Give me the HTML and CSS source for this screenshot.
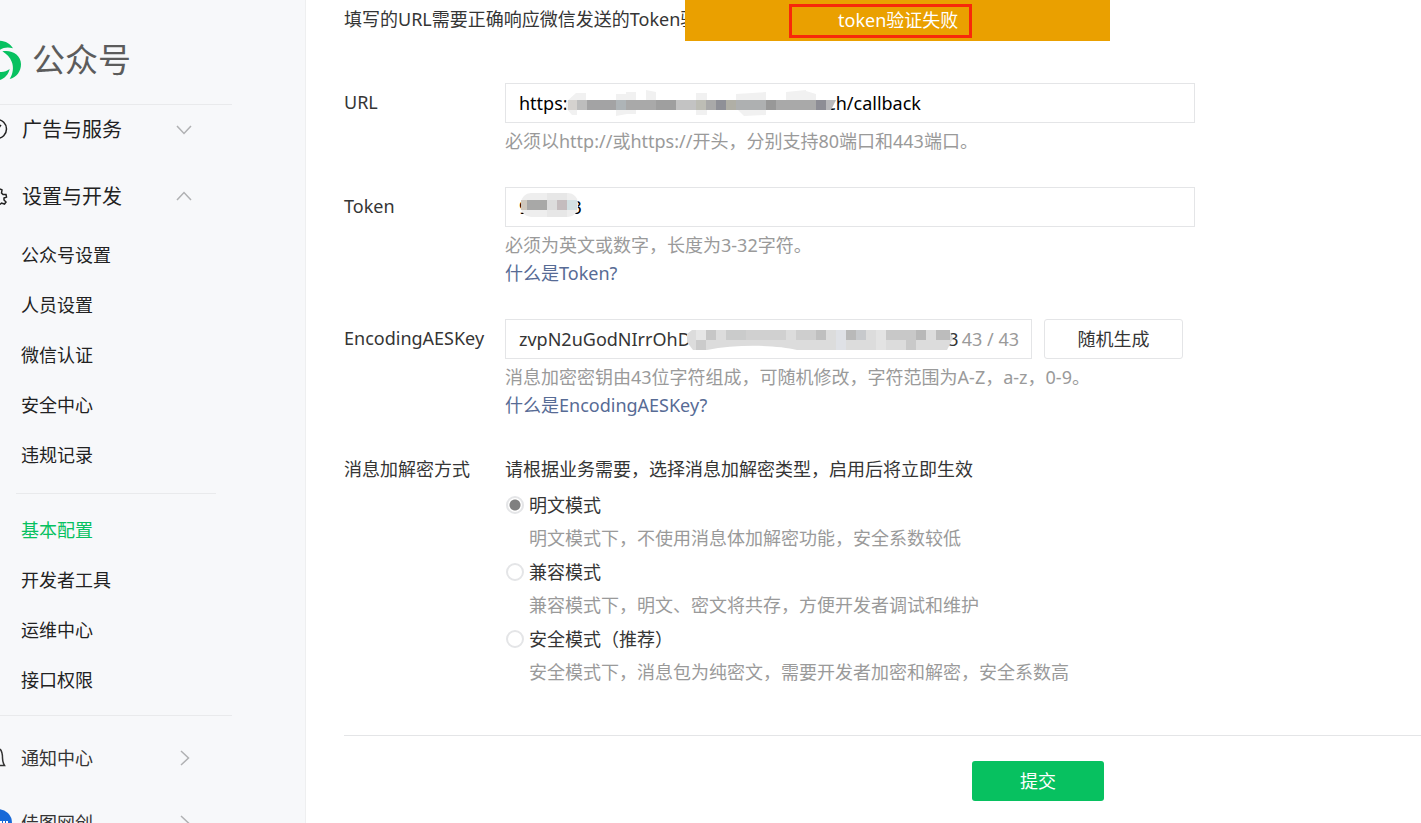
FILE: index.html
```html
<!DOCTYPE html>
<html lang="zh-CN">
<head>
    <meta charset="UTF-8">
    <meta name="viewport" content="width=device-width, initial-scale=1.0">
    <title>公众号</title>
    <link rel="stylesheet" href="styles.css">
</head>
<body>
    <div class="page">
        <aside class="sidebar">
            <div class="logo">
                <svg class="logo-icon" width="22" height="40" viewBox="0 0 66 120" aria-hidden="true">
                    <path fill="#07c160" d="M0 2C17 3 31 11 39 25C25 21 12 22 0 29Z"/>
                    <path fill="#07c160" d="M7 34C34 28 63 44 63 72C63 94 50 113 29 117C39 102 42 81 35 65C30 52 20 42 7 34Z"/>
                    <path fill="#07c160" d="M0 96C11 97 20 94 29 87C25 103 15 115 0 120Z"/>
                </svg>
                <span class="logo-text">公众号</span>
            </div>

            <nav class="menu">
                <a class="menu-title" href="#">
                    <svg class="menu-icon" width="22" height="24" viewBox="0 0 22 24" fill="none" stroke="#222" stroke-width="1.5" aria-hidden="true">
                        <circle cx="-3" cy="11" r="9.5"/>
                        <path d="M-4 13L1 7"/>
                    </svg>
                    <span>广告与服务</span>
                    <svg class="arrow" width="16" height="16" viewBox="0 0 16 16" fill="none" stroke="#b0b1b3" stroke-width="1.5" aria-hidden="true"><path d="M1 4L8 11.5L15 4"/></svg>
                </a>
                <a class="menu-title" href="#">
                    <svg class="menu-icon" width="22" height="24" viewBox="0 0 22 24" fill="none" stroke="#222" stroke-width="1.5" aria-hidden="true">
                        <path d="M0 4L2 5L1.5 8L3 9.5L6 9.5L6.500 12L4 13L4 15L6 17L4.5 19L1.5 18L0 19.5"/>
                    </svg>
                    <span>设置与开发</span>
                    <svg class="arrow" width="16" height="16" viewBox="0 0 16 16" fill="none" stroke="#b0b1b3" stroke-width="1.5" aria-hidden="true"><path d="M1 11L8 3.5L15 11"/></svg>
                </a>
                <ul class="submenu">
                    <li><a href="#">公众号设置</a></li>
                    <li><a href="#">人员设置</a></li>
                    <li><a href="#">微信认证</a></li>
                    <li><a href="#">安全中心</a></li>
                    <li><a href="#">违规记录</a></li>
                </ul>
                <ul class="submenu submenu-dev">
                    <li><a class="active" href="#">基本配置</a></li>
                    <li><a href="#">开发者工具</a></li>
                    <li><a href="#">运维中心</a></li>
                    <li><a href="#">接口权限</a></li>
                </ul>
            </nav>

            <div class="account">
                <a class="menu-title small" href="#">
                    <svg class="menu-icon" width="21" height="24" viewBox="0 0 21 24" fill="none" stroke="#333" stroke-width="1.5" aria-hidden="true">
                        <path d="M0 3C2 5 2.5 8 2.5 12C2.5 15 3 17 4.5 19.5H0"/>
                    </svg>
                    <span>通知中心</span>
                    <svg class="arrow" width="16" height="16" viewBox="0 0 16 16" fill="none" stroke="#b0b1b3" stroke-width="1.5" aria-hidden="true"><path d="M5 1L12.5 8L5 15"/></svg>
                </a>
                <a class="menu-title small" href="#">
                    <svg class="menu-icon" width="21" height="28" viewBox="0 0 21 28" aria-hidden="true">
                        <circle cx="-2" cy="14" r="14" fill="#1769d8"/>
                        <path d="M0 13H8" stroke="#fff" stroke-width="2" stroke-dasharray="2 1"/>
                    </svg>
                    <span>佳图网创</span>
                    <svg class="arrow" width="16" height="16" viewBox="0 0 16 16" fill="none" stroke="#b0b1b3" stroke-width="1.5" aria-hidden="true"><path d="M5 1L12.5 8L5 15"/></svg>
                </a>
            </div>
        </aside>

        <main class="content">
            <p class="intro">填写的URL需要正确响应微信发送的Token验证</p>

            <form class="config-form">
                <div class="form-row">
                    <label class="form-label" for="url">URL</label>
                    <div class="form-field">
                        <div class="input-box">
                            <input type="text" id="url" class="dark" value="https:/&nbsp;&nbsp;&nbsp;&nbsp;&nbsp;&nbsp;&nbsp;&nbsp;&nbsp;&nbsp;&nbsp;&nbsp;&nbsp;&nbsp;&nbsp;&nbsp;&nbsp;&nbsp;&nbsp;&nbsp;&nbsp;&nbsp;&nbsp;&nbsp;&nbsp;&nbsp;&nbsp;&nbsp;&nbsp;&nbsp;&nbsp;&nbsp;&nbsp;&nbsp;&nbsp;&nbsp;&nbsp;&nbsp;&nbsp;&nbsp;&nbsp;&nbsp;&nbsp;&nbsp;&nbsp;&nbsp;&nbsp;&nbsp;&nbsp;&nbsp;&nbsp;&nbsp;&nbsp;&nbsp;ch/callback">
                            <svg class="mask mask-url" width="272" height="30" viewBox="0 0 272 30" aria-hidden="true">
                                <path fill="#f1f1f1" d="M0 14L10 5H20V12H11V27H6L0 20ZM50 6H61V26L50 28ZM60 4H70V26H60ZM80 2L90 4V14H80ZM130 5H141V27H130ZM170 6L200 4V27L178 28L170 20ZM220 4L240 2V14H220ZM240 3L250 6V14H240Z"/>
                                <rect x="2" y="12" width="9" height="10" fill="#d5d2cf"/>
                                <rect x="11" y="12" width="10" height="10" fill="#bdbdbd"/>
                                <rect x="21" y="12" width="29" height="10" fill="#a3a3a4"/>
                                <rect x="50" y="12" width="10" height="10" fill="#aeb4b7"/>
                                <rect x="60" y="12" width="30" height="10" fill="#a9a9a9"/>
                                <rect x="90" y="12" width="20" height="10" fill="#9f9f9f"/>
                                <rect x="110" y="12" width="20" height="10" fill="#c3c3c3"/>
                                <rect x="130" y="12" width="10" height="10" fill="#bdbdb5"/>
                                <rect x="140" y="12" width="10" height="10" fill="#a9a9a9"/>
                                <rect x="150" y="12" width="10" height="10" fill="#8f9097"/>
                                <rect x="160" y="12" width="10" height="10" fill="#b0afa6"/>
                                <rect x="170" y="12" width="30" height="10" fill="#aeb0b1"/>
                                <rect x="200" y="12" width="10" height="10" fill="#989898"/>
                                <rect x="210" y="12" width="40" height="10" fill="#a9a9a9"/>
                                <rect x="250" y="12" width="10" height="10" fill="#8d8d95"/>
                                <path fill="#b8b8bb" d="M260 12H270L265 22H260Z"/>
                            </svg>
                        </div>
                        <p class="hint">必须以http://或https://开头，分别支持80端口和443端口。</p>
                    </div>
                </div>

                <div class="form-row">
                    <label class="form-label" for="token">Token</label>
                    <div class="form-field">
                        <div class="input-box">
                            <input type="text" id="token" class="dark" value="9&nbsp;&nbsp;&nbsp;&nbsp;&nbsp;&nbsp;&nbsp;&nbsp;&nbsp;3">
                            <svg class="mask mask-token" width="60" height="24" viewBox="0 0 60 24" aria-hidden="true">
                                <rect x="1" y="0" width="57" height="24" rx="10" fill="#eeeeee"/>
                                <rect x="27" y="0" width="20" height="24" fill="#e7e7e7"/>
                                <rect x="1" y="7" width="6" height="10" fill="#cfc8bd"/>
                                <rect x="7" y="7" width="20" height="10" fill="#a8a8a7"/>
                                <rect x="27" y="7" width="10" height="10" fill="#dcdcdc"/>
                                <rect x="37" y="7" width="10" height="10" fill="#c4bcbe"/>
                                <rect x="47" y="7" width="10" height="10" fill="#d3e0e3"/>
                            </svg>
                        </div>
                        <p class="hint">必须为英文或数字，长度为3-32字符。</p>
                        <a class="help" href="#">什么是Token?</a>
                    </div>
                </div>

                <div class="form-row">
                    <label class="form-label" for="aeskey">EncodingAESKey</label>
                    <div class="form-field">
                        <div class="key-line">
                            <div class="input-box key-box">
                                <input type="text" id="aeskey" value="zvpN2uGodNIrrOhD&nbsp;&nbsp;&nbsp;&nbsp;&nbsp;&nbsp;&nbsp;&nbsp;&nbsp;&nbsp;&nbsp;&nbsp;&nbsp;&nbsp;&nbsp;&nbsp;&nbsp;&nbsp;&nbsp;&nbsp;&nbsp;&nbsp;&nbsp;&nbsp;&nbsp;&nbsp;&nbsp;&nbsp;&nbsp;&nbsp;&nbsp;&nbsp;&nbsp;&nbsp;&nbsp;&nbsp;&nbsp;&nbsp;&nbsp;&nbsp;&nbsp;&nbsp;&nbsp;&nbsp;&nbsp;&nbsp;&nbsp;&nbsp;&nbsp;&nbsp;&nbsp;&nbsp;&nbsp;&nbsp;&nbsp;3">
                                <span class="counter">43 / 43</span>
                                <svg class="mask mask-key" width="266" height="20" viewBox="0 0 266 20" aria-hidden="true">
                                    <path fill="#dcdcdc" d="M5 0H262L266 8L260 20H110C90 15 50 14 20 20H6L0 12V4Z"/>
                                    <rect x="9" y="0" width="10" height="10" fill="#e6e6e6"/>
                                    <rect x="19" y="0" width="10" height="10" fill="#c6c6c6"/>
                                    <rect x="9" y="10" width="10" height="10" fill="#cbcbcb"/>
                                    <rect x="39" y="0" width="20" height="10" fill="#cacbcb"/>
                                    <rect x="59" y="0" width="40" height="10" fill="#d0d0d0"/>
                                    <rect x="109" y="0" width="20" height="10" fill="#cecece"/>
                                    <rect x="129" y="0" width="10" height="10" fill="#bfbfbf"/>
                                    <rect x="149" y="0" width="10" height="20" fill="#dfe1e6"/>
                                    <rect x="159" y="0" width="10" height="10" fill="#b9b9b9"/>
                                    <rect x="169" y="0" width="10" height="10" fill="#c7c9cc"/>
                                    <rect x="189" y="0" width="10" height="20" fill="#e3e3e3"/>
                                    <rect x="199" y="0" width="30" height="10" fill="#c8c8c8"/>
                                    <rect x="219" y="10" width="10" height="10" fill="#c9c9c9"/>
                                    <rect x="229" y="0" width="10" height="10" fill="#b8b8b8"/>
                                    <rect x="249" y="0" width="14" height="10" fill="#bcbcbc"/>
                                </svg>
                            </div>
                            <button type="button" class="btn btn-default">随机生成</button>
                        </div>
                        <p class="hint">消息加密密钥由43位字符组成，可随机修改，字符范围为A-Z，a-z，0-9。</p>
                        <a class="help" href="#">什么是EncodingAESKey?</a>
                    </div>
                </div>

                <div class="form-row mode-row">
                    <div class="form-label text-label" id="mode-label">消息加解密方式</div>
                    <div class="form-field" role="radiogroup" aria-labelledby="mode-label">
                        <p class="mode-tip">请根据业务需要，选择消息加解密类型，启用后将立即生效</p>
                        <div class="mode">
                            <label><input type="radio" name="mode" value="plain" checked>明文模式</label>
                            <p class="hint">明文模式下，不使用消息体加解密功能，安全系数较低</p>
                        </div>
                        <div class="mode">
                            <label><input type="radio" name="mode" value="compat">兼容模式</label>
                            <p class="hint">兼容模式下，明文、密文将共存，方便开发者调试和维护</p>
                        </div>
                        <div class="mode">
                            <label><input type="radio" name="mode" value="safe">安全模式（推荐）</label>
                            <p class="hint">安全模式下，消息包为纯密文，需要开发者加密和解密，安全系数高</p>
                        </div>
                    </div>
                </div>

                <div class="form-footer">
                    <button type="submit" class="btn btn-primary">提交</button>
                </div>
            </form>
        </main>
    </div>

    <div class="toast" role="alert">
        <span class="toast-text">token验证失败</span>
    </div>
</body>
</html>
```
FILE: styles.css
```css
* {
    box-sizing: border-box;
}

body {
    margin: 0;
    font-family: "Noto Sans", "Noto Sans CJK SC", sans-serif;
    font-size: 18px;
    line-height: 28px;
    color: #353535;
    background: #fff;
}

p,
ul {
    margin: 0;
    padding: 0;
}

a {
    text-decoration: none;
}

input,
button {
    font: inherit;
}

.page {
    display: flex;
    height: 100vh;
    overflow: hidden;
}

/* sidebar */
.sidebar {
    flex: 0 0 306px;
    padding-right: 73px;
    background: #f7f8fa;
    border-right: 1px solid #eeeff0;
}

.logo {
    display: flex;
    align-items: center;
    gap: 10px;
    height: 105px;
    padding-top: 16px;
    border-bottom: 1px solid #e9eaec;
}

.logo-text {
    font-size: 33px;
    color: #5c5c5c;
}

.menu-title {
    display: flex;
    align-items: center;
    height: 50px;
    margin-bottom: 17px;
    padding-right: 40px;
    font-size: 20px;
    color: #222;
}

.menu-title.small {
    margin-bottom: 15px;
    font-size: 18px;
    color: #353535;
}

.menu-icon {
    flex: none;
}

.arrow {
    margin-left: auto;
}

.submenu {
    margin-top: -9px;
    padding-left: 21px;
    list-style: none;
}

.submenu a {
    display: block;
    line-height: 50px;
    color: #222;
}

.submenu .active {
    color: #07c160;
}

.submenu-dev {
    margin: 13px 16px 0;
    padding: 11px 0 10px 5px;
    border-top: 1px solid #e9eaec;
}

.account {
    padding-top: 17px;
    border-top: 1px solid #e9eaec;
}

/* content */
.content {
    flex: 1;
    min-width: 0;
    padding: 5px 0 0 38px;
}

.intro {
    margin-bottom: 50px;
}

.form-row {
    display: grid;
    grid-template-columns: 161px 1fr;
    margin-bottom: 32px;
}

.form-label {
    line-height: 38px;
}

.text-label {
    line-height: 28px;
}

.input-box {
    position: relative;
    display: flex;
    align-items: center;
    width: 690px;
    height: 40px;
    padding: 0 12px 0 13px;
    border: 1px solid #e4e5e7;
}

.input-box input {
    flex: 1;
    min-width: 0;
    padding: 0;
    border: 0;
    outline: 0;
    background: none;
    color: #353535;
}

.input-box input.dark {
    color: #000;
}

.key-line {
    display: flex;
    gap: 12px;
}

.key-box {
    width: 527px;
}

.counter {
    color: #9a9a9a;
}

/* pixelated patches over the private part of a value */
.mask {
    position: absolute;
}

.mask-url {
    left: 60px;
    top: 4px;
}

.mask-token {
    left: 14px;
    top: 5px;
}

.mask-key {
    left: 181px;
    top: 10px;
}

.hint {
    margin-top: 4px;
    color: #9a9a9a;
}

.help {
    display: block;
    color: #576b95;
}

.btn {
    height: 40px;
    padding: 0;
    border-radius: 3px;
    cursor: pointer;
}

.btn-default {
    width: 139px;
    border: 1px solid #e4e5e7;
    background: #fff;
    color: #353535;
}

.btn-primary {
    width: 132px;
    border: 0;
    background: #07c160;
    color: #fff;
}

.mode-row {
    margin: 36px 0 49px;
}

.mode-tip {
    margin-bottom: 8px;
}

.mode {
    margin-bottom: 6px;
}

.mode label {
    display: flex;
    align-items: center;
    gap: 5px;
}

.mode .hint {
    margin-top: 5px;
    padding-left: 24px;
}

.mode:last-child {
    margin-bottom: 0;
}

.mode input {
    appearance: none;
    width: 18px;
    height: 18px;
    margin: 0 0 0 1px;
    border: 2px solid #e4e5e7;
    border-radius: 50%;
    background: #fff;
}

.mode input:checked {
    background: radial-gradient(circle, #808080 5px, #fff 6px);
}

.form-footer {
    padding: 25px 0 22px 628px;
    border-top: 1px solid #e4e5e7;
}

/* error message at the top of the window */
.toast {
    position: absolute;
    top: 0;
    left: 685px;
    width: 425px;
    padding: 4px 0 3px 104px;
    background: #eaa000;
    color: #fff;
}

.toast-text {
    display: block;
    width: 183px;
    padding: 0 0 2px 46px;
    border: 3px solid #f8280a;
    line-height: 26px;
}
```
